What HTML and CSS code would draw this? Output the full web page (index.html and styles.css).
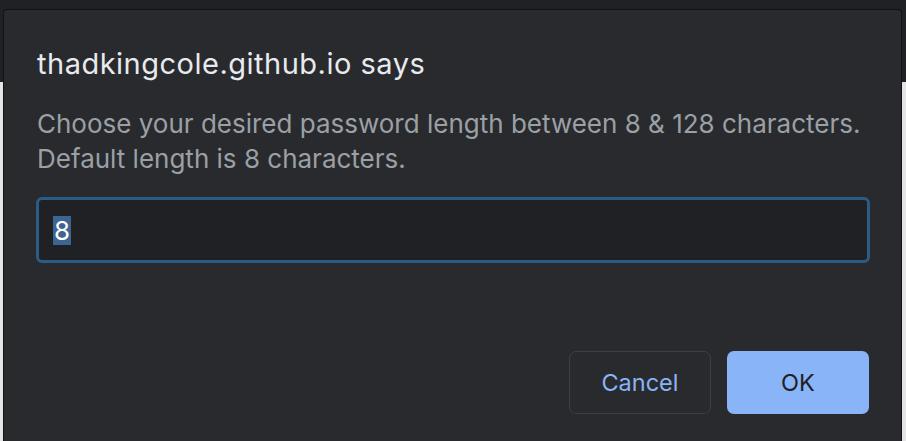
FILE: index.html
```html
<!DOCTYPE html>
<html>
<head>
<meta charset="utf-8">
<link rel="stylesheet" href="styles.css">
</head>
<body>
<div class="topbar"></div>
<div class="page"></div>
<div class="dialog">
  <div class="title">thadkingcole.github.io says</div>
  <div class="message">Choose your desired password length between 8 &amp; 128 characters.<br>Default length is 8 characters.</div>
  <div class="field"><span class="sel">8</span></div>
  <div class="actions">
    <div class="btn cancel">Cancel</div>
    <div class="btn ok">OK</div>
  </div>
</div>
</body>
</html>
```
FILE: styles.css
```css
html, body {
  margin: 0;
  padding: 0;
  width: 906px;
  height: 441px;
  overflow: hidden;
  background: #e4e4e4;
  font-family: Inter, "Liberation Sans", sans-serif;
}
.topbar {
  height: 82px;
  background: #202124;
}
.page {
  height: 359px;
  background: #e4e4e4;
}
.dialog {
  position: absolute;
  left: 3px;
  top: 9px;
  width: 899px;
  height: 432px;
  overflow: hidden;
  background: #292a2d;
  border: 1px solid #111214;
  border-bottom: none;
  border-radius: 4px 4px 0 0;
  box-sizing: border-box;
  padding: 39px 0 0 32px;
}
.title {
  color: #e8eaed;
  font-size: 29px;
  letter-spacing: 0.5px;
  line-height: 30px;
  height: 30px;
  padding-left: 1px;
}
.message {
  margin-top: 27px;
  color: #9aa0a6;
  font-size: 26px;
  line-height: 35px;
  padding-left: 1px;
  white-space: nowrap;
}
.field {
  margin-top: 21px;
  width: 834px;
  height: 66px;
  box-sizing: border-box;
  border: 3px solid #2b5c85;
  border-radius: 6px;
  background: #202124;
  display: flex;
  align-items: center;
  padding-left: 14px;
}
.sel {
  background: #3e6490;
  color: #ffffff;
  font-size: 26px;
  line-height: 29px;
  padding: 0 1px;
}
.actions {
  margin-top: 88px;
  display: flex;
  justify-content: flex-end;
  gap: 16px;
  width: 833px;
}
.btn {
  width: 142px;
  height: 63px;
  box-sizing: border-box;
  border-radius: 7px;
  display: flex;
  align-items: center;
  justify-content: center;
  font-size: 23.5px;
}
.cancel {
  border: 1px solid #3c4043;
  color: #8ab4f8;
}
.ok {
  background: #8ab4f8;
  color: #202124;
}
```
